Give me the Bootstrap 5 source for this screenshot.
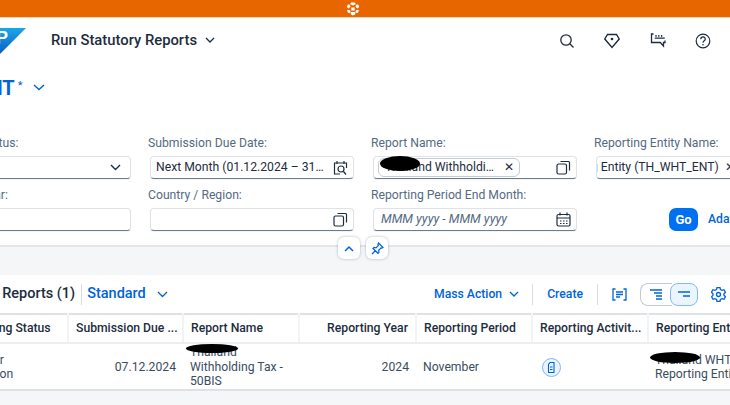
<!DOCTYPE html>
<html lang="en">
<head>
<meta charset="utf-8">
<title>Run Statutory Reports</title>
<link rel="stylesheet" href="https://cdn.jsdelivr.net/npm/bootstrap@5.3.0/dist/css/bootstrap.min.css">
<style>
html,body{height:405px;overflow:hidden;}
body{font-family:Roboto,"Liberation Sans",sans-serif;font-size:12.200px;color:#1d2d3e;background:#f5f6f7;width:730px;}
.topstrip{height:18px;background:#e86600;border-bottom:1px solid #f5d6bd;}
.tstrip-mark{margin-right:24px;}
.shellbar{height:45px;background:#fff;padding:0;}
.applogo{width:26px;height:26px;display:block;}
.apptitle{font-size:14.800px;font-weight:500;margin-left:25px;color:#1d2d3e;}
.shellicons{width:152px;margin-right:19px;}
.headrow{height:49px;background:#fff;margin:0;}
.headtext{font-size:20px;font-weight:700;color:#0064d9;margin-left:-29px;line-height:1;}
.headtext sup{font-size:11px;font-weight:400;top:-6px;margin-left:3px;}
.filterpane{background:#fff;height:135px;border-bottom:2px solid #e4e6e8;padding-top:22px;overflow:visible;}
.filtergrid{margin-left:-73px;width:900px;display:grid;grid-template-columns:repeat(4,204px);column-gap:19px;row-gap:7px;}
.flabel{color:#556b82;font-size:12.200px;line-height:18px;margin:0 0 4px -2px;white-space:nowrap;}
.fbox{height:23px;border:1px solid #dfe3e7;border-bottom-color:#6a7d90;border-radius:4px;padding:0 5px 0 5px;font-size:12.200px;line-height:1;color:#1d2d3e;background:#fff;min-height:0;overflow:hidden;box-shadow:0 1px 1px rgba(0,0,0,.05);white-space:nowrap;}
.fbox em{color:#556b82;font-size:12.600px;margin-left:2px;}
.tokenchip{border:1px solid #c5cbd1;border-radius:6px;height:19px;width:142px;padding:0 5px 0 6px;font-size:12.200px;white-space:nowrap;margin-left:-1px;}
.tokenscroll{white-space:nowrap;margin-left:-57px;}
.gobtn{--bs-btn-padding-x:0;--bs-btn-padding-y:0;width:29px;height:23px;background:#0070f2;border:0;border-radius:7px;color:#fff;font-size:13px;font-weight:700;line-height:23px;margin-left:73px;flex:none;}
.adapt{color:#0064d9;font-weight:500;font-size:12.200px;white-space:nowrap;margin-left:10px;text-decoration:none;line-height:23px;}
.collapsers{position:relative;height:0;}
.floatbtn{position:absolute;top:-11px;width:22px;height:22px;background:#fff;border-radius:6px;box-shadow:0 0 3px rgba(30,50,80,.35);padding:0;border:0;display:flex;align-items:center;justify-content:center;}
.resultcard{background:#fff;margin-top:28px;height:116px;overflow:hidden;border-bottom:2px solid #dfe2e5;}
.tbar{height:38px;padding-right:0;}
.tbtitle{font-size:14.500px;font-weight:500;margin-left:-61px;white-space:nowrap;color:#1d2d3e;}
.tbdiv{width:1px;height:21px;background:#d9dde1;}
.tbdiv-std{margin:0 5px 0 6px;}
.tbview{color:#0064d9;font-size:14.500px;font-weight:500;}
.tblink{color:#0064d9;font-size:12.200px;font-weight:500;text-decoration:none;white-space:nowrap;}
.segwrap{width:58px;height:23px;}
.segleft{width:32px;height:23px;border:1px solid #c3cad1;border-radius:8px 0 0 8px;border-right:0;background:#fff;padding:0;}
.segright{width:28px;margin-left:-2px;height:23px;border:1px solid #84b8f2;border-radius:8px;background:#ebf5fe;padding:0;}
.rtable{table-layout:fixed;width:928px;margin:0 0 0 -48px;border-top:2px solid #dfe2e5;font-size:12.200px;--bs-table-color:#1d2d3e;}
.rtable th{height:29px;padding:0 7px;font-weight:500;color:#1d2d3e;white-space:nowrap;overflow:hidden;border-right:2px solid #f2f3f4;border-bottom:2px solid #eceef0;vertical-align:middle;font-size:12.200px;}
.rtable td{height:47px;padding:0 7px;line-height:14.500px;vertical-align:middle;color:#3b4d60;border:0;}
.docbadge{margin-left:3px;}
.inkblot{position:absolute;background:#000;border-radius:50%;}
.cellwrap{position:relative;}
.hosticon{display:block;}
.tick-gap{margin-left:11px;}
.seg-gap{margin-left:13px;}
.gearicon{margin:0 4px 0 13px;flex:none;}
.mass-tick{margin-left:7px;}
.tbar-div-a{margin:0 14px 0 13px;}
.tbar-div-b{margin:0 14px;}
</style>
</head>
<body>
<div class="topstrip d-flex justify-content-center align-items-center">
  <svg class="tstrip-mark" width="14" height="14" viewBox="0 0 14 14" fill="#fff"><path d="M5 .5h4l.8 1.800L7 3.400 4.200 2.300zM1.800 2.600l2 .2.700 2-2 1.600-1.600-1.400zM12.200 2.600l-2 .2-.7 2 2 1.600 1.600-1.400zM5.300 5.400h3.400v3.200H5.300zM1 8.200l2-.4 1.500 1.200-.2 2-2.200-.2zM13 8.200l-2-.4-1.500 1.200.2 2 2.200-.2zM5 10h4l.4 2.200L7 13.500l-2.400-1.300z"/></svg>
</div>

<nav class="navbar shellbar d-flex align-items-center justify-content-between flex-nowrap">
  <div class="d-flex align-items-center">
    <svg class="applogo" viewBox="0 0 26 26"><defs><linearGradient id="lg" x1="0" y1="0" x2="0" y2="1"><stop offset="0" stop-color="#1ba6e8"/><stop offset="1" stop-color="#0a5fc4"/></linearGradient></defs><path d="M-2 0H26L0 26H-2z" fill="url(#lg)"/><text x="-4" y="16" font-family="Liberation Sans" font-weight="700" font-size="18" fill="#fff">P</text></svg>
    <span class="apptitle">Run Statutory Reports</span>
    <svg class="ms-2" width="10" height="7" viewBox="0 0 10 7" fill="none" stroke="#1d2d3e" stroke-width="1.300"><path d="M1 1l4 4 4-4"/></svg>
  </div>
  <div class="shellicons d-flex justify-content-between align-items-center">
    <svg class="hosticon" width="16" height="16" viewBox="0 0 16 16" fill="none" stroke="#1d2d3e" stroke-width="1.300"><circle cx="7" cy="7" r="5.200"/><path d="M11 11l3.500 3.500"/></svg>
    <svg class="hosticon" width="16" height="16" viewBox="0 0 16 16" fill="none" stroke="#1d2d3e" stroke-width="1.400"><path d="M3.500 1.500h9L15.200 6 8 14.500.8 6z"/><circle cx="8" cy="6" r="1.300" fill="#1d2d3e" stroke="none"/></svg>
    <svg class="hosticon" width="16" height="16" viewBox="0 0 16 16" fill="none" stroke="#1d2d3e" stroke-width="1.300"><path d="M3.500 1H1.500v8.500h8.800l3.200 3.500V9.500H15V7.500"/><path d="M6 2v1.800M8.800 2v1.800M11.600 2v1.800M4.800 5.200h10" stroke-width="1.300"/></svg>
    <svg class="hosticon" width="16" height="16" viewBox="0 0 16 16" fill="none" stroke="#1d2d3e" stroke-width="1.200"><circle cx="8" cy="8" r="6.800"/><path d="M5.800 6.200c0-3 4.500-3 4.500-.1 0 1.800-2.300 1.700-2.300 3.700"/><circle cx="8" cy="11.800" r=".8" fill="#1d2d3e" stroke="none"/></svg>
  </div>
</nav>

<div class="headrow d-flex align-items-center">
  <span class="headtext">WHT<sup>*</sup></span>
  <svg class="tick-gap" width="12" height="7" viewBox="0 0 12 7" fill="none" stroke="#0064d9" stroke-width="1.400"><path d="M1 1l5 4.500L11 1"/></svg>
</div>

<section class="filterpane">
  <div class="filtergrid">
    <div>
      <div class="flabel">Reporting Status:</div>
      <div class="fbox form-control d-flex align-items-center justify-content-end">
        <svg width="11" height="7" viewBox="0 0 11 7" fill="none" stroke="#1d2d3e" stroke-width="1.400" class="me-1"><path d="M1 1l4.500 4.500L10 1"/></svg>
      </div>
    </div>
    <div>
      <div class="flabel">Submission Due Date:</div>
      <div class="fbox form-control d-flex align-items-center justify-content-between">
        <span>Next Month (01.12.2024 – 31…</span>
        <svg width="15" height="16" viewBox="0 0 15 16" fill="none" stroke="#1d2d3e" stroke-width="1.200"><path d="M4 1v3M11 1v3M7 14H1.500V3h12v5"/><circle cx="8" cy="9" r="3"/><path d="M10.500 11.500L13 14.500"/></svg>
      </div>
    </div>
    <div class="cellwrap">
      <div class="flabel">Report Name:</div>
      <div class="fbox form-control d-flex align-items-center justify-content-between">
        <span class="tokenchip d-flex align-items-center justify-content-between"><span>Thailand Withholdi…</span><span>✕</span></span>
        <svg width="15" height="15" viewBox="0 0 15 15" fill="none" stroke="#1d2d3e" stroke-width="1.200"><rect x="1" y="4" width="9.500" height="10" rx="1.500"/><path d="M4.500 1.500h8a1 1 0 0 1 1 1v8"/></svg>
      </div>
      <span class="inkblot" style="left:7px;top:22px;width:40px;height:15px"></span>
    </div>
    <div>
      <div class="flabel">Reporting Entity Name:</div>
      <div class="fbox form-control d-flex align-items-center">
        <span class="tokenscroll">Reporting Entity (TH_WHT_ENT) &nbsp;✕</span>
      </div>
    </div>
    <div>
      <div class="flabel">Reporting Year:</div>
      <div class="fbox form-control"></div>
    </div>
    <div>
      <div class="flabel">Country / Region:</div>
      <div class="fbox form-control d-flex align-items-center justify-content-end">
        <svg width="15" height="15" viewBox="0 0 15 15" fill="none" stroke="#1d2d3e" stroke-width="1.200"><rect x="1" y="4" width="9.500" height="10" rx="1.500"/><path d="M4.500 1.500h8a1 1 0 0 1 1 1v8"/></svg>
      </div>
    </div>
    <div>
      <div class="flabel">Reporting Period End Month:</div>
      <div class="fbox form-control d-flex align-items-center justify-content-between">
        <em>MMM yyyy - MMM yyyy</em>
        <svg width="15" height="15" viewBox="0 0 15 15" fill="none" stroke="#1d2d3e" stroke-width="1.200"><rect x="1" y="2.500" width="13" height="11.500" rx="1.500"/><path d="M4 .5v3M11 .5v3M1 6h13M4 9h1.500M7 9h1.500M10 9h1.500M4 11.500h1.500M7 11.500h1.500M10 11.500h1.500"/></svg>
      </div>
    </div>
    <div class="d-flex align-items-end">
      <button class="btn gobtn" type="button">Go</button>
      <a class="adapt" href="#">Adapt Filters</a>
    </div>
  </div>
  <div class="collapsers">
    <button class="floatbtn" type="button" style="left:338px;top:6px" aria-label="Collapse"><svg width="10" height="7" viewBox="0 0 10 7" fill="none" stroke="#0064d9" stroke-width="1.500"><path d="M1 6l4-4 4 4"/></svg></button>
    <button class="floatbtn" type="button" style="left:366px;top:6px" aria-label="Pin"><svg width="13" height="13" viewBox="0 0 13 13" fill="none" stroke="#0064d9" stroke-width="1.200"><path d="M7.500 1l4.500 4.500-1 .7-1-.3-2.300 2.400.3 2-1 1L2 6.500l1-1 2 .3L7.300 3.500 7 2.300zM4.500 8.500L1 12"/></svg></button>
  </div>
</section>

<section class="resultcard">
  <div class="tbar d-flex align-items-center">
    <span class="tbtitle">Statutory Reports (1)</span>
    <span class="tbdiv tbdiv-std"></span>
    <span class="tbview">Standard</span>
    <svg class="tick-gap" width="11" height="7" viewBox="0 0 11 7" fill="none" stroke="#0064d9" stroke-width="1.300"><path d="M1 1l4.500 4.500L10 1"/></svg>
    <span class="flex-grow-1"></span>
    <a class="tblink" href="#">Mass Action</a>
    <svg class="mass-tick" width="10" height="7" viewBox="0 0 10 7" fill="none" stroke="#0064d9" stroke-width="1.300"><path d="M1 1l4 4 4-4"/></svg>
    <span class="tbdiv tbar-div-a"></span>
    <a class="tblink" href="#">Create</a>
    <span class="tbdiv tbar-div-b"></span>
    <svg width="15" height="13" viewBox="0 0 15 13" fill="none" stroke="#0064d9" stroke-width="1.300"><path d="M3.500 1H1v11h2.500M11.500 1H14v11h-2.500M4 4h7M4 6.500h7M4 9h4"/></svg>
    <div class="segwrap d-flex seg-gap">
      <button class="segleft" type="button" aria-label="Tree"><svg width="13" height="11" viewBox="0 0 13 11" fill="none" stroke="#0064d9" stroke-width="1.300"><path d="M0 1h12M4 4h8M6 7h6M6 10h6"/></svg></button>
      <button class="segright" type="button" aria-label="Collapse tree"><svg width="13" height="8" viewBox="0 0 13 8" fill="none" stroke="#0064d9" stroke-width="1.300"><path d="M0 1h12M5 5h7"/></svg></button>
    </div>
    <svg class="gearicon" width="15" height="15" viewBox="0 0 15 15" fill="none" stroke="#0064d9" stroke-width="1.300"><path d="M6 1h3l.4 2 1.700.9 1.900-.7 1.400 2.600-1.500 1.400v1.600l1.500 1.400-1.400 2.600-1.900-.7-1.700.9-.4 2H6l-.4-2-1.700-.9-1.900.7-1.400-2.600L2 8.800V7.200L.5 5.800l1.400-2.600 1.900.7 1.700-.9z" transform="translate(0 -.5)"/><circle cx="7.500" cy="7.500" r="2"/></svg>
  </div>
  <div class="cellwrap">
    <table class="table rtable">
      <colgroup><col style="width:116px"><col style="width:115px"><col style="width:116px"><col style="width:117px"><col style="width:116px"><col style="width:116px"><col style="width:232px"></colgroup>
      <thead><tr>
        <th>Reporting Status</th><th>Submission Due ...</th><th>Report Name</th><th class="text-end">Reporting Year</th><th>Reporting Period</th><th>Reporting Activit...</th><th>Reporting Entity</th>
      </tr></thead>
      <tbody><tr>
        <td>To Enter<br>Validation</td>
        <td class="text-end">07.12.2024</td>
        <td>Thailand<br>Withholding Tax -<br>50BIS</td>
        <td class="text-end">2024</td>
        <td>November</td>
        <td><svg class="docbadge" width="19" height="19" viewBox="0 0 19 19" fill="#e8f3fe" stroke="#0064d9"><circle cx="9.500" cy="9.500" r="9" stroke="#7fb6f3"/><path d="M8 4.500h4v10H6.500V6.500zM8 9h2.500M8 11.500h2.500" fill="none" stroke-width="1.100"/></svg></td>
        <td>Thailand WHT<br>Reporting Entity</td>
      </tr></tbody>
    </table>
    <span class="inkblot" style="left:186px;top:31px;width:52px;height:9px"></span>
    <span class="inkblot" style="left:650px;top:39px;width:50px;height:11px"></span>
  </div>
</section>
<script src="https://cdn.jsdelivr.net/npm/bootstrap@5.3.0/dist/js/bootstrap.bundle.min.js"></script>
</body>
</html>
